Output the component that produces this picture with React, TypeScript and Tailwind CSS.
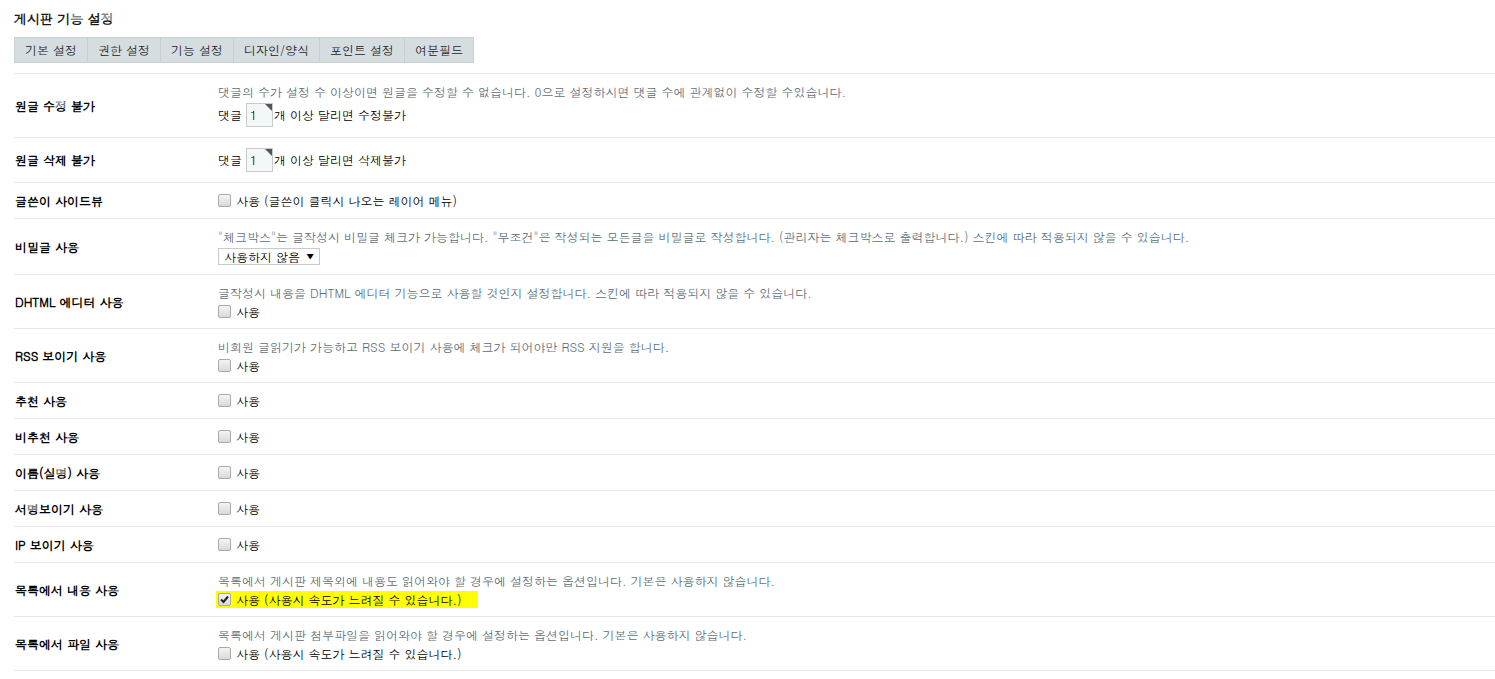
import { FC, ReactNode } from 'react';

const FONT = { fontFamily: '"Dotum", "Noto Sans CJK KR", "Noto Sans", sans-serif' };

const TABS = ['기본 설정', '권한 설정', '기능 설정', '디자인/양식', '포인트 설정', '여분필드'];

const Check: FC<{ checked?: boolean }> = ({ checked }) => (
  <span className="mr-[5px] inline-flex h-[13px] w-[13px] shrink-0 items-center justify-center rounded-[2px] border border-[#a9a9a9] bg-gradient-to-b from-[#f4f4f4] to-[#d9d9d9]">
    {checked && (
      <svg width="9" height="9" viewBox="0 0 9 9">
        <path d="M1 4.5 L3.5 7 L8 1.5" fill="none" stroke="#222" strokeWidth="2" />
      </svg>
    )}
  </span>
);

const NumInput: FC = () => (
  <span className="relative ml-[4px] mr-[1px] inline-flex h-6 w-[27px] items-center border border-[#c6ccce] bg-[#f4f7f7] pl-[3px] text-[12px] text-black">
    1
    <span className="absolute right-0 top-0 h-0 w-0 border-l-[7px] border-t-[7px] border-l-transparent border-t-[#555]" />
  </span>
);

const Desc: FC<{ children: ReactNode }> = ({ children }) => (
  <div className="h-[19px] leading-[19px] text-[#5b6e78]">{children}</div>
);

const Use: FC<{ text?: string; checked?: boolean }> = ({ text = '사용', checked }) => (
  <div className="flex h-[19px] items-center">
    <Check checked={checked} />
    <span className="leading-[19px]">{text}</span>
  </div>
);

const Row: FC<{ label: string; h: string; children: ReactNode }> = ({ label, h, children }) => (
  <div className={`flex items-center border-b border-[#e7e8e8] ${h}`}>
    <div className="w-[204px] shrink-0 pl-px font-bold text-black">{label}</div>
    <div className="flex flex-1 flex-col justify-center">{children}</div>
  </div>
);

export default function App() {
  return (
    <div className="min-h-[679px] bg-white pl-[14px] text-[12px] text-black" style={FONT}>
      <h1 className="pt-[9px] text-[13px] font-bold leading-[19px] text-[#1a1a1a]">게시판 기능 설정</h1>
      <div className="mt-[9px] flex h-[26px] w-fit border border-[#c9d0d3] bg-[#d6dde0]">
        {TABS.map((t, i) => (
          <div
            key={t}
            className={`flex items-center justify-center px-[10px] leading-[24px] text-[#222] ${i > 0 ? 'border-l border-[#c9d0d3]' : ''}`}
          >
            {t}
          </div>
        ))}
      </div>

      <div className="mt-[10px] border-t border-[#e7e8e8]">
        <Row label="원글 수정 불가" h="h-[64px]">
          <Desc>댓글의 수가 설정 수 이상이면 원글을 수정할 수 없습니다. 0으로 설정하시면 댓글 수에 관계없이 수정할 수있습니다.</Desc>
          <div className="flex h-[29px] items-center">
            댓글 <NumInput />개 이상 달리면 수정불가
          </div>
        </Row>
        <Row label="원글 삭제 불가" h="h-[45px]">
          <div className="flex h-[29px] items-center">
            댓글 <NumInput />개 이상 달리면 삭제불가
          </div>
        </Row>
        <Row label="글쓴이 사이드뷰" h="h-[36px]">
          <Use text="사용 (글쓴이 클릭시 나오는 레이어 메뉴)" />
        </Row>
        <Row label="비밀글 사용" h="h-[56px]">
          <Desc>
            "체크박스"는 글작성시 비밀글 체크가 가능합니다. "무조건"은 작성되는 모든글을 비밀글로 작성합니다. (관리자는 체크박스로 출력합니다.) 스킨에 따라 적용되지 않을 수 있습니다.
          </Desc>
          <div className="flex h-[21px] items-center">
            <span className="flex h-[17px] items-center border border-[#c6ccce] bg-white px-[5px] leading-[15px]">
              사용하지 않음 <span className="ml-[6px] text-[9px]">▼</span>
            </span>
          </div>
        </Row>
        <Row label="DHTML 에디터 사용" h="h-[54px]">
          <Desc>글작성시 내용을 DHTML 에디터 기능으로 사용할 것인지 설정합니다. 스킨에 따라 적용되지 않을 수 있습니다.</Desc>
          <Use />
        </Row>
        <Row label="RSS 보이기 사용" h="h-[54px]">
          <Desc>비회원 글읽기가 가능하고 RSS 보이기 사용에 체크가 되어야만 RSS 지원을 합니다.</Desc>
          <Use />
        </Row>
        <Row label="추천 사용" h="h-[36px]">
          <Use />
        </Row>
        <Row label="비추천 사용" h="h-[36px]">
          <Use />
        </Row>
        <Row label="이름(실명) 사용" h="h-[36px]">
          <Use />
        </Row>
        <Row label="서명보이기 사용" h="h-[36px]">
          <Use />
        </Row>
        <Row label="IP 보이기 사용" h="h-[36px]">
          <Use />
        </Row>
        <Row label="목록에서 내용 사용" h="h-[54px]">
          <Desc>목록에서 게시판 제목외에 내용도 읽어와야 할 경우에 설정하는 옵션입니다. 기본은 사용하지 않습니다.</Desc>
          <div className="flex h-[19px] items-center">
            <span className="-ml-[2px] flex h-[17px] items-center bg-[#ffff00] pl-[2px] pr-[16px]">
              <Check checked />
              <span className="leading-[19px]">사용 (사용시 속도가 느려질 수 있습니다.)</span>
            </span>
          </div>
        </Row>
        <Row label="목록에서 파일 사용" h="h-[54px]">
          <Desc>목록에서 게시판 첨부파일을 읽어와야 할 경우에 설정하는 옵션입니다. 기본은 사용하지 않습니다.</Desc>
          <Use text="사용 (사용시 속도가 느려질 수 있습니다.)" />
        </Row>
      </div>
    </div>
  );
}
